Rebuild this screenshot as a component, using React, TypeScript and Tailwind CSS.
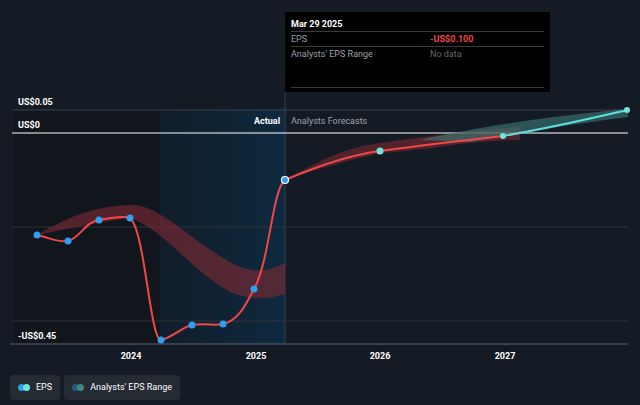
export default function App() {
  const pts: [number, number][] = [[37,235],[68,241],[99,220],[130,218],[161,340],[192,325],[223,324],[254,289]];
  return (
    <div className="relative w-[640px] h-[405px] bg-[#151b24] overflow-hidden" style={{fontFamily: "Roboto, 'Liberation Sans', sans-serif"}}>
      <svg className="absolute left-0 top-0" width="640" height="345" viewBox="0 0 640 345">
        <defs>
          <linearGradient id="hl" x1="0" x2="1" y1="0" y2="0">
            <stop offset="0" stopColor="#0f2030" stopOpacity="0.6" />
            <stop offset="1" stopColor="#0e2a40" />
          </linearGradient>
        </defs>
        <rect x="14" y="110" width="146" height="234" fill="#11161d" />
        <rect x="160" y="110" width="125" height="234" fill="url(#hl)" />
        <line x1="285" y1="92" x2="285" y2="344" stroke="#2f4050" />
        <line x1="12" y1="110" x2="628" y2="110" stroke="#3a424d" />
        <line x1="12" y1="227" x2="628" y2="227" stroke="#2c333d" />
        <line x1="12" y1="321" x2="628" y2="321" stroke="#2c333d" />
        <line x1="10" y1="344" x2="628" y2="344" stroke="#5a626c" />
        <line x1="12" y1="133" x2="628" y2="133" stroke="#ffffff" strokeWidth="1.2" />
        {[131,256,380,505].map(x => <line key={x} x1={x} y1="344" x2={x} y2="348" stroke="#5a626c" />)}
        <path d="M37 235 C70 215 100 205 132 205 C160 205 190 240 230 262 C255 276 270 270 285 263 L285 294 C265 300 250 300 230 292 C190 270 165 230 130 218 C100 222 70 228 37 235 Z" fill="#7a2a33" fillOpacity="0.65" />
        <path d="M285 180 C320 160 350 146 380 143 C430 136 470 131 520 127 L520 140 C470 140 430 150 380 153 C350 160 320 168 285 180 Z" fill="#7a2a33" fillOpacity="0.6" />
        <path d="M420 140 C480 126 560 115 628 109 L628 117 C570 124 520 134 470 142 Z" fill="#3f7d78" fillOpacity="0.6" />
        <path d={"M37 235 C50 238 60 243 68 241 C80 238 85 222 99 220 C110 218 125 216 130 218 C145 230 150 340 161 340 C172 338 182 327 192 325 C205 323 215 326 223 324 C240 320 248 300 254 289 C270 260 272 190 285 180 C320 165 350 155 380 151 C430 144 470 140 503 136 C510 135 515 134 522 132"} fill="none" stroke="#f04848" strokeWidth="2" />
        <path d="M503 136 C560 126 600 116 628 110" fill="none" stroke="#5ce0e0" strokeWidth="2" />
        {pts.map(([x,y],i)=> <circle key={i} cx={x} cy={y} r="3.5" fill="#2e9ef0" />)}
        <circle cx="285" cy="180" r="3.5" fill="#2e9ef0" stroke="#ffffff" strokeWidth="1.2" />
        <circle cx="380" cy="151" r="3.5" fill="#6ee6dc" />
        <circle cx="503" cy="136" r="3" fill="#6ee6dc" />
        <circle cx="627" cy="110" r="3" fill="#6ee6dc" />
      </svg>
      <div className="absolute left-[18px] top-[96px] text-[9px] font-bold text-white">US$0.05</div>
      <div className="absolute left-[18px] top-[119px] text-[9px] font-bold text-white">US$0</div>
      <div className="absolute left-[18px] top-[330px] text-[9px] font-bold text-white">-US$0.45</div>
      <div className="absolute left-[254px] top-[115px] text-[9px] font-bold text-white">Actual</div>
      <div className="absolute left-[291px] top-[115px] text-[9px] text-[#9aa1a8]">Analysts Forecasts</div>
      {[["2024",131],["2025",256],["2026",380],["2027",505]].map(([t,x]) => (
        <div key={t as string} className="absolute top-[350px] w-[40px] -ml-[20px] text-center text-[9px] font-bold text-white" style={{left: x as number}}>{t}</div>
      ))}
      <div className="absolute left-[285px] top-[12px] w-[265px] h-[80px] bg-black px-[6px] pt-[6px] text-[9px] leading-[12px]">
        <div className="font-bold text-white pb-[1px] border-b border-[#3a3a3a]">Mar 29 2025</div>
        <div className="flex py-[1px] border-b border-[#3a3a3a]"><span className="w-[139px] text-[#9aa1a8]">EPS</span><span className="font-bold text-[#f04848]">-US$0.100</span></div>
        <div className="flex py-[1px] h-[41px] border-b border-[#3a3a3a]"><span className="w-[139px] text-[#9aa1a8]">Analysts' EPS Range</span><span className="text-[#666]">No data</span></div>
      </div>
      <div className="absolute left-[10px] top-[375px] flex gap-[4px]">
        <div className="flex items-center gap-[6px] h-[25px] px-[8px] rounded bg-[#252b33] text-[9px] text-white">
          <span className="flex"><span className="w-[7px] h-[7px] rounded-full bg-[#2e9ef0]"></span><span className="-ml-[2px] w-[7px] h-[7px] rounded-full bg-[#6ee6dc]"></span></span>EPS
        </div>
        <div className="flex items-center gap-[6px] h-[25px] px-[8px] rounded bg-[#252b33] text-[9px] text-white">
          <span className="flex"><span className="w-[7px] h-[7px] rounded-full bg-[#2a5a7a]"></span><span className="-ml-[2px] w-[7px] h-[7px] rounded-full bg-[#3f8a80]"></span></span>Analysts' EPS Range
        </div>
      </div>
    </div>
  );
}
